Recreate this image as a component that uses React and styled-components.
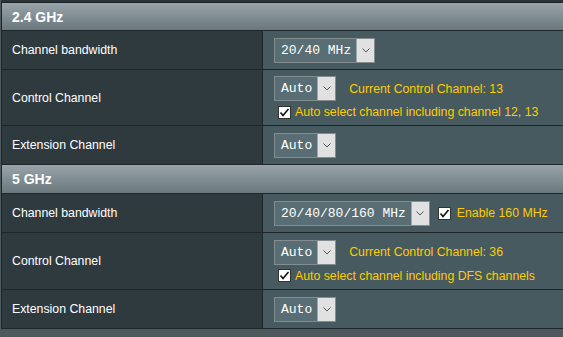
import styled, { createGlobalStyle } from 'styled-components';

const GlobalStyle = createGlobalStyle`
    body {
        margin: 0;
        background: #4d595d;
        font-family: "Liberation Sans", Arial, sans-serif;
        overflow: hidden;
    }
`

const Page = styled.div`
    padding-left: 1px;
`

const TopEdge = styled.div`
    height: 2px;
    background: #2a3337;
`

const Table = styled.div`
    border: 1px solid #1e2629;
    border-right: none;
`

const Header = styled.div`
    height: ${(p) => p.height}px;
    display: flex;
    align-items: center;
    padding-left: 10px;
    background: linear-gradient(#98a4a9 0%, #6a787e 100%);
    border-bottom: 1px solid #1e2629;
    color: #fff;
    font-size: 14px;
    font-weight: bold;
`

const Row = styled.div`
    display: grid;
    grid-template-columns: 261px 1fr;
    min-height: ${(p) => p.height}px;
    border-bottom: ${(p) => (p.last ? 'none' : '1px solid #1e2629')};
`

const Label = styled.div`
    display: flex;
    align-items: center;
    padding-left: 10px;
    background: #2f3a3f;
    border-right: 1px solid #1e2629;
    color: #fff;
    font-size: 12.3px;
`

const Cell = styled.div`
    display: flex;
    flex-direction: column;
    justify-content: center;
    gap: 4px;
    padding: 0 10px 0 11px;
    background: #475a5f;
`

const Line = styled.div`
    display: flex;
    align-items: center;
`

const SelectBox = styled.div`
    display: flex;
    height: 23px;
    border: 1px solid #838d90;
`

const SelectValue = styled.div`
    display: flex;
    align-items: center;
    padding: 0 5px 0 6px;
    background: #596e74;
    color: #fff;
    font-family: "Liberation Mono", "Courier New", monospace;
    font-size: 13px;
`

const SelectArrow = styled.div`
    width: 17px;
    display: flex;
    align-items: center;
    justify-content: center;
    background: #e1e1e1;
    border-left: 1px solid #a0a7a9;
`

const Hint = styled.span`
    color: #ffcc00;
    font-size: 12.3px;
    margin-left: ${(p) => p.gap || 0}px;
`

const Box = styled.span`
    width: 11px;
    height: 11px;
    display: inline-flex;
    align-items: center;
    justify-content: center;
    background: #fff;
    border: 1px solid #333;
    margin-left: ${(p) => p.gap || 0}px;
`

function Select({ value }) {
    return (
        <SelectBox>
            <SelectValue>{value}</SelectValue>
            <SelectArrow>
                <svg width="8" height="5" viewBox="0 0 8 5">
                    <path d="M0.5 0.5 L4 4 L7.5 0.5" fill="none" stroke="#555" strokeWidth="1" />
                </svg>
            </SelectArrow>
        </SelectBox>
    )
}

function Checkbox({ gap }) {
    return (
        <Box gap={gap}>
            <svg width="11" height="11" viewBox="0 0 11 11">
                <path d="M1.5 5.5 L4 8.5 L9.5 2" fill="none" stroke="#111" strokeWidth="1.6" />
            </svg>
        </Box>
    )
}

function Band({ title, bandwidth, extra, channel, autoText, headerHeight, controlHeight, last }) {
    return (
        <>
            <Header height={headerHeight}>{title}</Header>
            <Row height={38}>
                <Label>Channel bandwidth</Label>
                <Cell>
                    <Line>
                        <Select value={bandwidth} />
                        {extra && (
                            <>
                                <Checkbox gap={8} />
                                <Hint gap={6}>{extra}</Hint>
                            </>
                        )}
                    </Line>
                </Cell>
            </Row>
            <Row height={controlHeight}>
                <Label>Control Channel</Label>
                <Cell>
                    <Line>
                        <Select value="Auto" />
                        <Hint gap={13}>Current Control Channel: {channel}</Hint>
                    </Line>
                    <Line>
                        <Checkbox gap={4} />
                        <Hint gap={4}>{autoText}</Hint>
                    </Line>
                </Cell>
            </Row>
            <Row height={38} last={last}>
                <Label>Extension Channel</Label>
                <Cell>
                    <Line>
                        <Select value="Auto" />
                    </Line>
                </Cell>
            </Row>
        </>
    )
}

function App() {
    return (
        <>
            <GlobalStyle />
            <Page>
                <TopEdge />
                <Table>
                    <Band
                        title="2.4 GHz"
                        bandwidth="20/40 MHz"
                        channel="13"
                        autoText="Auto select channel including channel 12, 13"
                        headerHeight={27}
                        controlHeight={55}
                    />
                    <Band
                        title="5 GHz"
                        bandwidth="20/40/80/160 MHz"
                        extra="Enable 160 MHz"
                        channel="36"
                        autoText="Auto select channel including DFS channels"
                        headerHeight={28}
                        controlHeight={56}
                        last
                    />
                </Table>
            </Page>
        </>
    )
}

export default App;
